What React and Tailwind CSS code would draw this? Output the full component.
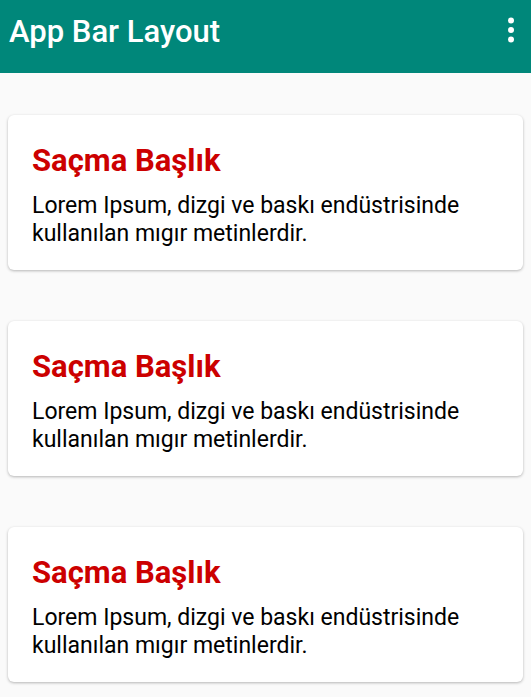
export default function App() {
  const cards = [0, 1, 2];
  return (
    <div className="min-h-[697px] w-[531px] bg-[#fafafa]" style={{ fontFamily: 'Roboto, "Noto Sans", sans-serif' }}>
      <header className="flex h-[73px] items-start justify-between bg-[#00877a] pl-[9px] pr-[17px] pt-[14px]">
        <h1 className="text-[31px] font-medium leading-[36px] text-white">App Bar Layout</h1>
        <svg width="6" height="26" viewBox="0 0 6 26" className="mt-[3px]">
          <circle cx="3" cy="3.5" r="3" fill="#fff" />
          <circle cx="3" cy="13" r="3" fill="#fff" />
          <circle cx="3" cy="22.5" r="3" fill="#fff" />
        </svg>
      </header>
      <main className="flex flex-col gap-[51px] px-[8px] pt-[42px]">
        {cards.map((i) => (
          <div key={i} className="h-[155px] rounded-[6px] bg-white px-[24px] pt-[28px] shadow-[0_1px_3px_rgba(0,0,0,0.28)]">
            <h2 className="text-[31px] font-bold leading-[36px] text-[#cc0000]">Saçma Başlık</h2>
            <p className="mt-[13px] text-[23px] leading-[28px] text-black">
              Lorem Ipsum, dizgi ve baskı endüstrisinde
              <br />
              kullanılan mıgır metinlerdir.
            </p>
          </div>
        ))}
      </main>
    </div>
  );
}
